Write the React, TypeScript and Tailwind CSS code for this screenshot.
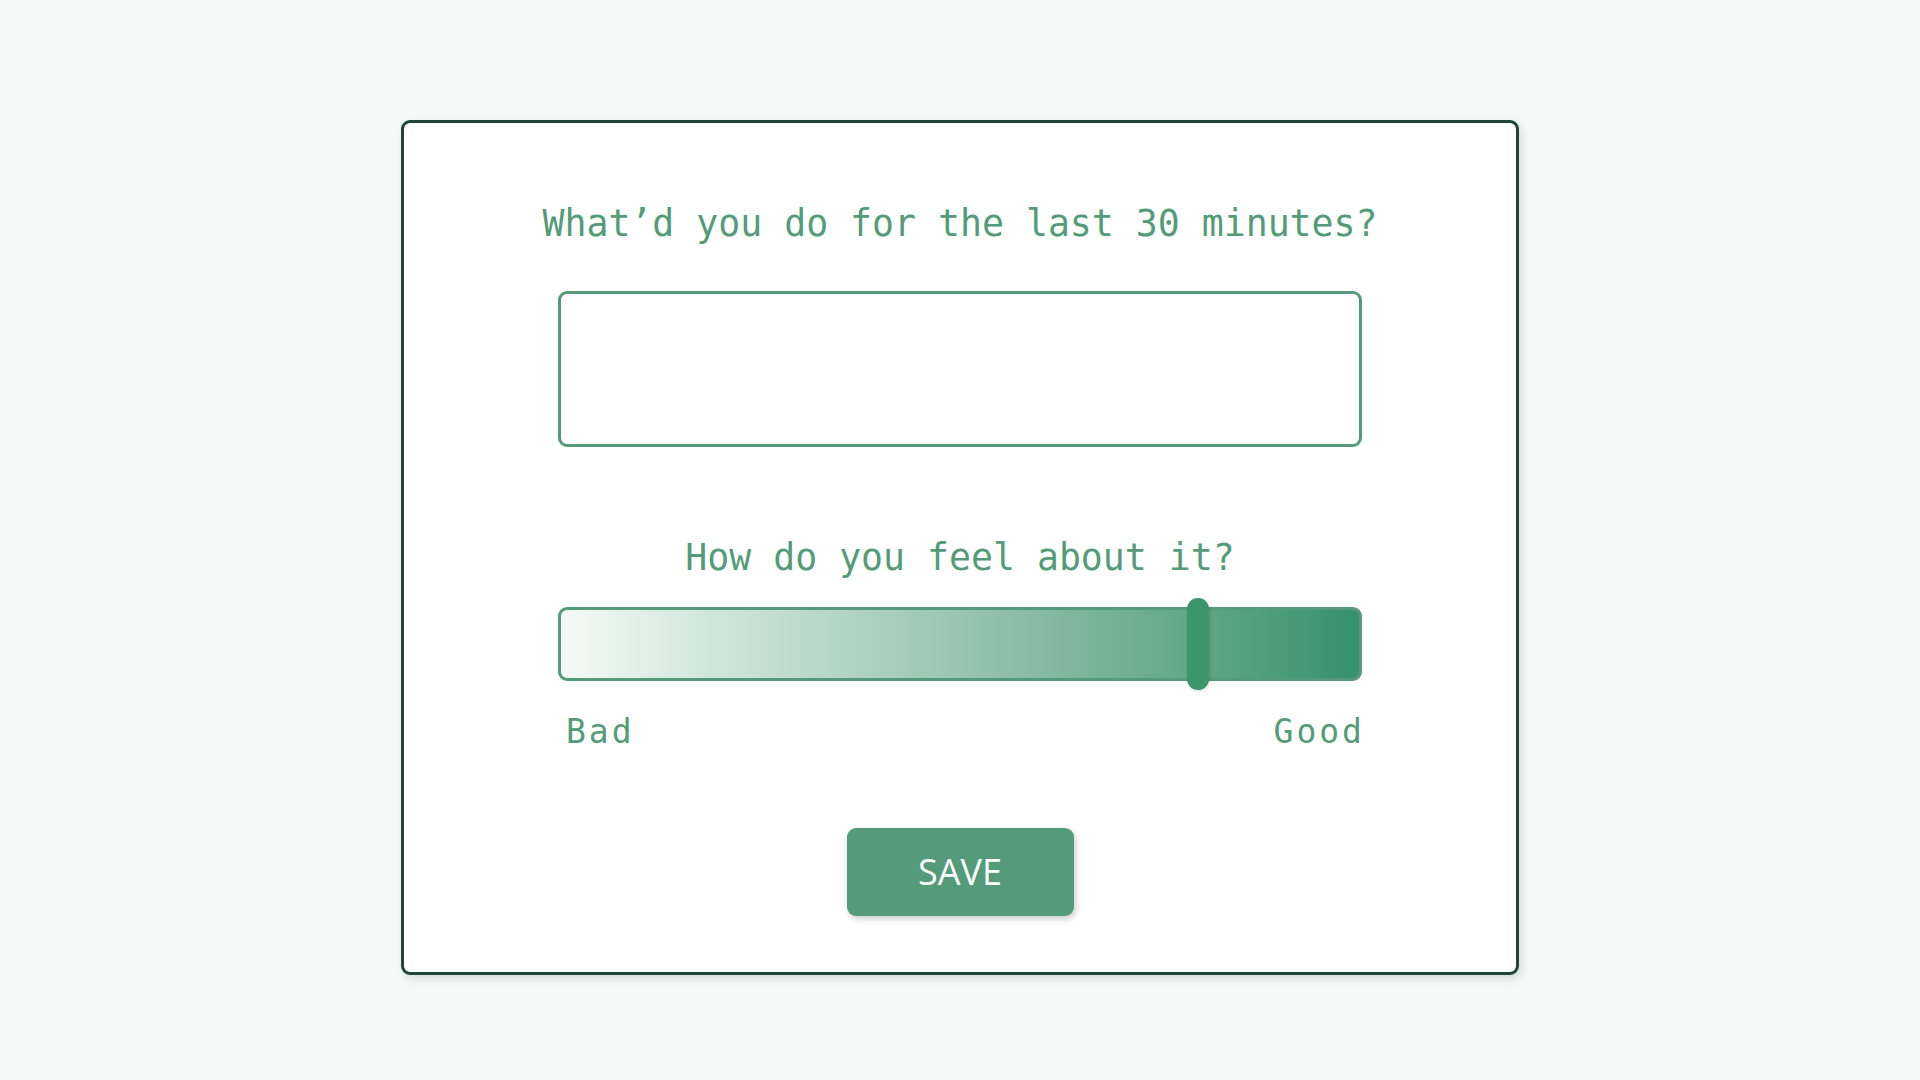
import { useState } from "react";

const mono = { fontFamily: '"DejaVu Sans Mono", "Liberation Mono", monospace' };

export default function App() {
  const [note, setNote] = useState("");
  const [mood] = useState(80);

  return (
    <div className="min-h-screen w-full bg-[#f4faf8] pt-[120px]">
      <div className="mx-auto flex w-[1118px] flex-col items-center rounded-[9px] border-[3px] border-[#1f4537] bg-white pt-[83px] pb-[56px] shadow-[3px_4px_8px_rgba(0,0,0,0.12)]">
        <h1 style={mono} className="text-[36.5px] leading-[36px] text-[#529c79]">
          What’d you do for the last 30 minutes?
        </h1>

        <textarea
          value={note}
          onChange={(e) => setNote(e.target.value)}
          className="mt-[49px] h-[156px] w-[804px] resize-none rounded-[9px] border-[3px] border-[#549c79] bg-white px-4 py-3 text-2xl text-[#2f6e50] outline-none"
        />

        <h2 style={mono} className="mt-[93px] text-[36.5px] leading-[36px] text-[#529c79]">
          How do you feel about it?
        </h2>

        <div className="relative mt-[31px] h-[74px] w-[804px] rounded-[9px] border-[3px] border-[#549c79] bg-gradient-to-r from-[#f3faf7] to-[#34926a]">
          <div
            className="absolute top-[-12px] h-[92px] w-[22px] rounded-[11px] bg-[#3a966b] shadow-[1px_1px_3px_rgba(0,0,0,0.15)]"
            style={{ left: `${mood * 7.76 + 5}px` }}
          />
        </div>

        <div style={mono} className="mt-[35px] flex w-[804px] justify-between pl-[8px] text-[33px] leading-[32px] tracking-[3px] text-[#529c79]">
          <span>Bad</span>
          <span className="-mr-[3px]">Good</span>
        </div>

        <button
          style={{ fontFamily: '"Open Sans", "Noto Sans", sans-serif' }}
          className="mt-[80px] flex h-[88px] w-[227px] items-center justify-center rounded-[9px] bg-[#549c79] text-[36px] text-white shadow-[2px_3px_6px_rgba(0,0,0,0.2)]"
        >
          SAVE
        </button>
      </div>
    </div>
  );
}
